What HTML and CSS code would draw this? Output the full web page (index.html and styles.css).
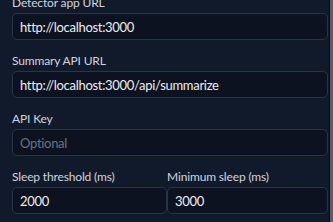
FILE: index.html
```html
<!DOCTYPE html>
<html lang="en">
<head>
  <meta charset="UTF-8">
  <title>Settings</title>
  <link rel="stylesheet" href="styles.css">
</head>
<body>
  <div class="page">
    <form class="settings">
      <div class="field">
        <label for="detectorUrl">Detector app URL</label>
        <input type="text" id="detectorUrl" value="http://localhost:3000">
      </div>

      <div class="field">
        <label for="summaryUrl">Summary API URL</label>
        <input type="text" id="summaryUrl" value="http://localhost:3000/api/summarize">
      </div>

      <div class="field">
        <label for="apiKey">API Key</label>
        <input type="password" id="apiKey" placeholder="Optional">
      </div>

      <div class="row">
        <div class="field">
          <label for="sleepThreshold">Sleep threshold (ms)</label>
          <input type="number" id="sleepThreshold" value="2000">
        </div>
        <div class="field">
          <label for="minSleep">Minimum sleep (ms)</label>
          <input type="number" id="minSleep" value="3000">
        </div>
      </div>
    </form>
    <div class="scrollbar"></div>
  </div>
</body>
</html>
```

FILE: styles.css
```css
html, body {
  margin: 0;
  height: 100%;
  overflow: hidden;
}

body {
  font-family: Lato, "Liberation Sans", sans-serif;
  background-color: #111a2b;
  color: #e5e7eb;
}

.page {
  display: flex;
  height: 100%;
}

.settings {
  flex: 1;
  padding: 0 1px 0 12px;
  margin-top: -4px;
}

.field {
  margin-bottom: 14px;
}

.field label {
  display: block;
  font-size: 12px;
  line-height: 14px;
  letter-spacing: -0.15px;
  margin-bottom: 3px;
  color: #cfd5de;
}

.field input {
  display: block;
  box-sizing: border-box;
  width: 100%;
  height: 27px;
  margin: 0;
  padding: 0 7px;
  font-family: inherit;
  font-size: 13px;
  letter-spacing: -0.3px;
  color: #eceef2;
  background-color: #0c121f;
  border: 1px solid #28344a;
  border-radius: 5px;
  outline: none;
}

.field input::placeholder {
  color: #6b7383;
}

.field input::-webkit-inner-spin-button,
.field input::-webkit-outer-spin-button {
  -webkit-appearance: none;
  margin: 0;
}

.row {
  display: grid;
  grid-template-columns: 155px 1fr;
  column-gap: 0;
}

.scrollbar {
  width: 3px;
  border-left: 1px solid #0a0f18;
  background-color: #5a5d63;
}
```
